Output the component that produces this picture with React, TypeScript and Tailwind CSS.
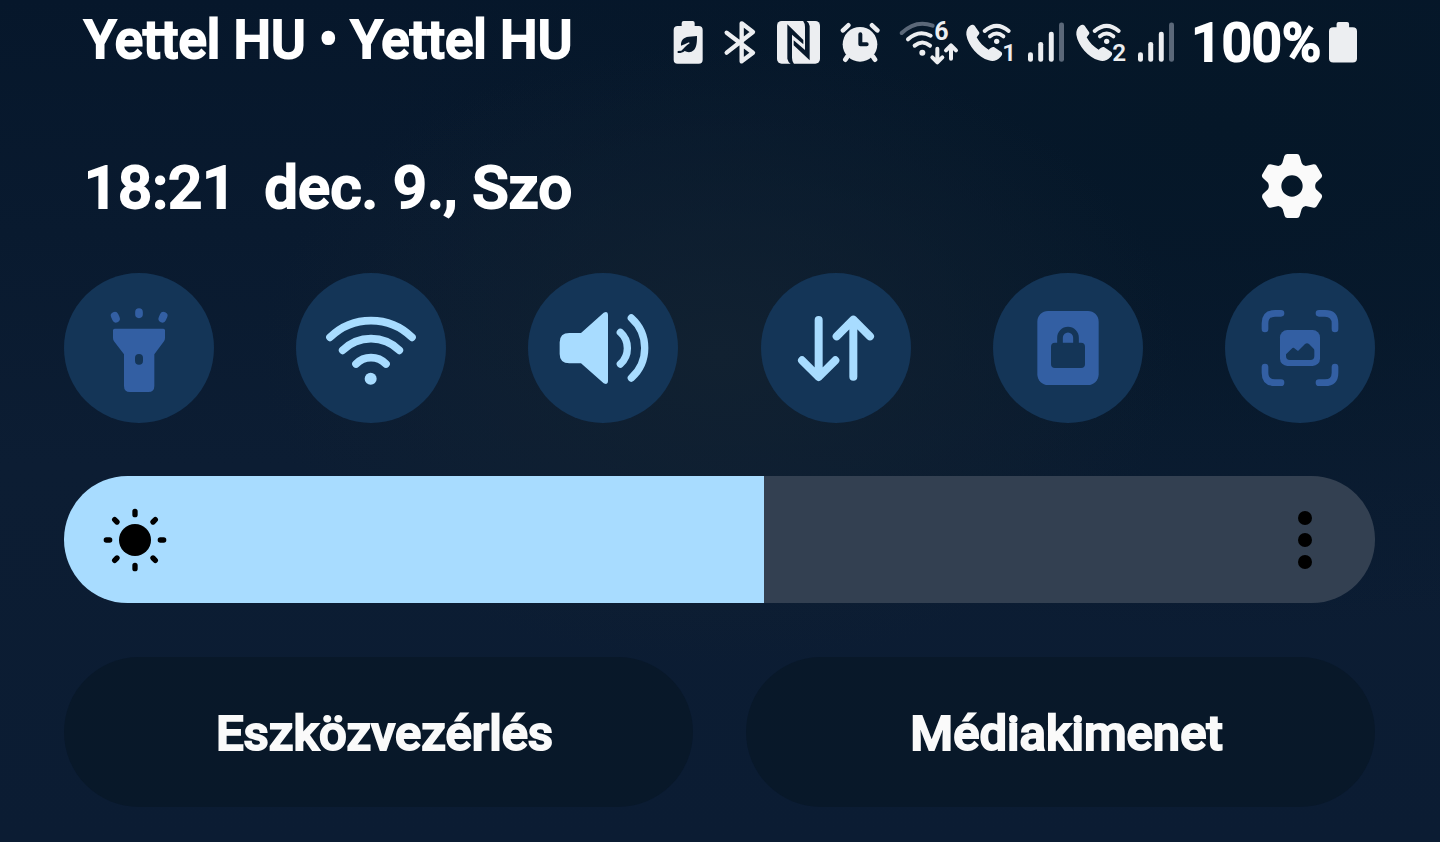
import { useState } from "react";
import type { ReactNode } from "react";

const EcoBatteryIcon = () => (
  <svg viewBox="37 60 90 138" className="h-[46px] w-[30px]" fill="#eceef1">
    <path d="M69 63 H96 Q102 63 102 69 V78 H114 Q126 78 126 90 V179 Q126 191 114 191 H51 Q39 191 39 179 V90 Q39 78 51 78 H63 V69 Q63 63 69 63 Z" />
    <path fill="#07182b" d="M109 108 L84 110 C68 112 60 121 61 137 C68 136 76 131 85 127 L87 130 C76 137 69 146 62 152 L51 153 V159 C58 160 66 158 72 153 C80 158 92 158 99 151 C108 142 109 128 109 108 Z" />
  </svg>
);

const BluetoothIcon = () => (
  <svg viewBox="189 60 102 138" className="h-[46px] w-[34px]" fill="none" stroke="#eceef1" strokeWidth="13" strokeLinecap="round" strokeLinejoin="round">
    <path d="M200 98 L279 158 L245 184 V70 L279 96 L200 158" />
  </svg>
);

const NfcIcon = () => (
  <svg viewBox="351 60 129 138" className="h-[46px] w-[43px]">
    <rect x="351" y="63" width="129" height="128" rx="14" fill="#eceef1" />
    <g fill="#07182b">
      <path d="M382 73 L430 120 V133 L396 104 V173 Q396 184 402 192 H392 Q385 188 382 176 Z" />
      <path d="M449 181 L401 136 V121 L435 150 V81 Q435 70 429 62 H439 Q446 66 449 78 Z" />
    </g>
  </svg>
);

const AlarmIcon = () => (
  <svg viewBox="540 60 120 138" className="h-[46px] w-10" fill="none" strokeLinecap="round" strokeLinejoin="round">
    <g stroke="#eceef1" strokeWidth="14">
      <path d="M549 91 L565 76 M636 76 L652 91 M562 170 L556 179 M639 170 L645 179" />
    </g>
    <circle cx="600" cy="133" r="52" fill="#eceef1" />
    <path d="M601 103 V133 H620" stroke="#07182b" strokeWidth="12" />
  </svg>
);

const Wifi6Icon = () => (
  <svg viewBox="30 60 174 138" className="h-[46px] w-[58px] overflow-visible" fill="none" strokeLinecap="round" strokeLinejoin="round">
    <path d="M35 99 Q78 58 128 77" stroke="#5b6879" strokeWidth="12" />
    <g stroke="#eceef1" strokeWidth="12">
      <path d="M54 118 Q86 88 122 107" />
      <path d="M74 137 Q97 118 120 137" />
      <path d="M142 146 V186 M127 172 L142 187 L157 172" />
      <path d="M183 176 V137 M168 151 L183 136 L198 151" />
    </g>
    <circle cx="97" cy="158" r="9" fill="#eceef1" />
    <text x="133" y="121" fill="#eceef1" fontSize="75" fontWeight="700">6</text>
  </svg>
);

const WifiCallIcon = ({ sim }: { sim: string }) => (
  <svg viewBox="222 60 150 138" className="h-[46px] w-[50px] overflow-visible" fill="none" strokeLinecap="round">
    <path fill="#eceef1" d="M234 77 C240 73 246 74 249 79 L261 96 C264 101 260 104 254 112 C262 128 276 141 290 149 C298 142 302 139 307 142 L328 156 C332 160 331 165 326 170 C314 184 302 185 290 181 C260 172 228 138 223 104 C222 92 226 82 234 77 Z" />
    <g stroke="#eceef1" strokeWidth="12">
      <path d="M278 93 Q314 62 350 93" />
      <path d="M294 109 Q314 92 334 109" />
    </g>
    <circle cx="314" cy="124" r="8" fill="#eceef1" />
    <text x="331" y="184" fill="#eceef1" fontSize="73" fontWeight="600">{sim}</text>
  </svg>
);

const SignalIcon = () => (
  <svg viewBox="407 60 109 138" className="h-[46px] w-9" fill="#eceef1">
    <rect x="407" y="157" width="15" height="29" rx="7" />
    <rect x="438" y="126" width="15" height="60" rx="7" />
    <rect x="470" y="95" width="15" height="91" rx="7" />
    <rect x="501" y="67" width="15" height="119" rx="7" fill="#5b6879" />
  </svg>
);

const BatteryIcon = () => (
  <svg viewBox="627 60 85 138" className="h-[46px] w-7" fill="#eceef1">
    <path d="M656 65 H682 Q688 65 688 71 V81 H699 Q712 81 712 93 V176 Q712 188 699 188 H640 Q627 188 627 176 V93 Q627 81 640 81 H650 V71 Q650 65 656 65 Z" />
  </svg>
);

const GearIcon = () => (
  <svg viewBox="60 72 192 192" className="size-16" fill="#fafafa" fillRule="evenodd">
    <path d="M142 72 H171 Q177 72 179 78 L185 99 Q188 107 197 108 L221 103 Q227 103 230 107 L245 133 Q248 138 244 143 L228 158 Q223 168 228 178 L244 193 Q248 198 245 204 L230 229 Q227 234 221 233 L197 228 Q188 229 185 237 L179 258 Q177 264 171 264 H142 Q136 264 134 258 L128 237 Q124 229 115 228 L91 233 Q85 234 82 229 L67 204 Q65 198 68 193 L84 178 Q89 168 84 158 L68 143 Q64 138 67 133 L82 107 Q85 103 91 103 L115 108 Q124 107 127 99 L133 78 Q136 72 142 72 Z M156 136 A32 32 0 1 0 156 200 A32 32 0 1 0 156 136 Z" />
  </svg>
);

const TorchIcon = () => (
  <svg viewBox="42 39 450 450" className="size-full">
    <path fill="currentColor" d="M194 206 H340 Q345 206 345 211 V234 Q345 240 342 244 L313 283 V378 Q313 396 295 396 H240 Q222 396 222 378 V283 L192 244 Q189 240 189 234 V211 Q189 206 194 206 Z" />
    <rect x="255" y="282" width="24" height="32" rx="12" fill="#143557" />
    <path d="M267 156 V163 M194 167 L198 176 M341 167 L337 176" fill="none" stroke="currentColor" strokeWidth="23" strokeLinecap="round" />
  </svg>
);

const WifiIcon = () => (
  <svg viewBox="738 39 450 450" className="size-full" fill="none" stroke="currentColor" strokeWidth="23" strokeLinecap="round">
    <path d="M840 232 A176 176 0 0 1 1086 232" />
    <path d="M878 271 A121 121 0 0 1 1048 271" />
    <path d="M918 312 A63 63 0 0 1 1008 312" />
    <circle cx="962" cy="356" r="18" fill="currentColor" stroke="none" />
  </svg>
);

const SoundIcon = () => (
  <svg viewBox="24 39 450 450" className="size-full" fill="none" stroke="currentColor" strokeWidth="22" strokeLinecap="round">
    <path fill="currentColor" stroke="none" d="M148 219 H183 L251 158 Q264 152 264 164 V364 Q264 376 251 370 L183 310 H148 Q119 310 119 282 V247 Q119 219 148 219 Z" />
    <path d="M301 217 A64 64 0 0 1 301 312" />
    <path d="M334 174 A121 121 0 0 1 334 354" />
  </svg>
);

const MobileDataIcon = () => (
  <svg viewBox="720 39 450 450" className="size-full" fill="none" stroke="currentColor" strokeWidth="24" strokeLinecap="round" strokeLinejoin="round">
    <path d="M893 180 V350 M843 301 L893 351 L943 301" />
    <path d="M997 350 V180 M947 229 L997 179 L1047 229" />
  </svg>
);

const SecureFolderIcon = () => (
  <svg viewBox="36 39 450 450" className="size-full">
    <rect x="169" y="153" width="184" height="222" rx="32" fill="currentColor" />
    <rect x="210" y="248" width="102" height="76" rx="12" fill="#143557" />
    <path d="M237 256 V233 A24 24 0 0 1 285 233 V256" fill="none" stroke="#143557" strokeWidth="17" />
  </svg>
);

const ScreenshotIcon = () => (
  <svg viewBox="732 39 450 450" className="size-full">
    <g fill="none" stroke="currentColor" strokeWidth="20" strokeLinecap="round">
      <path d="M900 160 H882 Q852 160 852 190 V207" />
      <path d="M1014 160 H1032 Q1062 160 1062 190 V207" />
      <path d="M852 321 V338 Q852 368 882 368 H900" />
      <path d="M1062 321 V338 Q1062 368 1032 368 H1014" />
    </g>
    <rect x="897" y="210" width="120" height="108" rx="22" fill="currentColor" />
    <path fill="#143557" d="M915 283 L932 266 Q937 261 942 266 L951 273 L972 252 Q978 247 984 252 L998 266 Q1000 268 1000 272 V288 Q1000 300 988 300 H927 Q915 300 915 288 Z" />
  </svg>
);

const SunIcon = () => (
  <svg viewBox="159 144 192 192" className="size-16">
    <circle cx="255" cy="240" r="48" />
    <path d="M255 154 V164 M255 316 V326 M169 240 H179 M331 240 H341 M194 179 L201 186 M316 179 L309 186 M194 301 L201 294 M316 301 L309 294" stroke="#000" strokeWidth="16" strokeLinecap="round" />
  </svg>
);

type Tile = { label: string; on: boolean; icon: ReactNode };

const tiles: Tile[] = [
  { label: "Zseblámpa", on: false, icon: <TorchIcon /> },
  { label: "Wi-Fi", on: true, icon: <WifiIcon /> },
  { label: "Hang", on: true, icon: <SoundIcon /> },
  { label: "Mobiladatok", on: true, icon: <MobileDataIcon /> },
  { label: "Biztonsági mappa", on: false, icon: <SecureFolderIcon /> },
  { label: "Képernyőkép", on: false, icon: <ScreenshotIcon /> },
];

// the phone's own bold is a thickened medium weight
const heavy = "font-medium [-webkit-text-stroke:2px_currentColor]";

const StatusBar = () => (
  <div className="flex items-start justify-between pt-4 pl-[84px] pr-[83px]">
    <span className={`text-[53px] leading-[48px] ${heavy}`}>Yettel HU • Yettel HU</span>

    <div className="flex items-center gap-2">
      <div className="flex items-center gap-5">
        <EcoBatteryIcon />
        <BluetoothIcon />
        <NfcIcon />
        <AlarmIcon />
        <Wifi6Icon />
      </div>
      <div className="flex items-center gap-3">
        <WifiCallIcon sim="1" />
        <SignalIcon />
        <WifiCallIcon sim="2" />
        <SignalIcon />
      </div>
      <div className="flex items-center gap-2 pl-2.5">
        <span className={`text-[53px] leading-[54px] ${heavy}`}>100%</span>
        <BatteryIcon />
      </div>
    </div>
  </div>
);

const BrightnessSlider = () => {
  const [level, setLevel] = useState(534);

  return (
    <div className="relative h-[127px] overflow-hidden rounded-full">
      <input
        type="range"
        aria-label="Fényerő"
        min={0}
        max={1000}
        value={level}
        onChange={(e) => setLevel(Number(e.target.value))}
        className="block h-full w-full appearance-none [&::-webkit-slider-thumb]:size-0 [&::-webkit-slider-thumb]:appearance-none"
        style={{
          background: `linear-gradient(to right, #a8dcff ${level / 10}%, #334051 ${level / 10}%)`,
        }}
      />
      <div className="pointer-events-none absolute inset-y-0 left-[39px] flex items-center">
        <SunIcon />
      </div>
      <button aria-label="Fényerő beállításai" className="absolute inset-y-0 right-[63px] flex flex-col items-center justify-center gap-2">
        <span className="size-[14px] rounded-full bg-black" />
        <span className="size-[14px] rounded-full bg-black" />
        <span className="size-[14px] rounded-full bg-black" />
      </button>
    </div>
  );
};

const PanelButton = ({ children }: { children: ReactNode }) => (
  <button className={`h-[150px] rounded-full bg-[#05131f]/50 pt-1 pl-3 text-[49px] text-[#fafafa] ${heavy}`}>
    {children}
  </button>
);

export default function App() {
  return (
    <main className="min-h-screen bg-[#0a1b31] bg-[radial-gradient(ellipse_at_50%_42%,#112131_0%,#11213100_45%),radial-gradient(ellipse_at_85%_15%,#051728_0%,#05172800_50%),linear-gradient(to_bottom,#06172b_0%,#0c1d33_55%,#0b1c33_100%)] pb-9 font-[Roboto,sans-serif] text-white">
      <StatusBar />

      {/* Clock row */}
      <header className="mt-20 flex items-center justify-between pl-[84px] pr-[116px]">
        <h1 className={`flex gap-7 pt-1 text-[60px] leading-[68px] ${heavy}`}>
          <time>18:21</time>
          <span>dec. 9., Szo</span>
        </h1>
        <button aria-label="Beállítások">
          <GearIcon />
        </button>
      </header>

      <div className="mt-[51px] pl-16 pr-[65px]">
        {/* Quick toggles */}
        <div className="flex justify-between">
          {tiles.map((tile) => (
            <button
              key={tile.label}
              aria-label={tile.label}
              aria-pressed={tile.on}
              className={`size-[150px] rounded-full bg-[#143557] ${tile.on ? "text-[#a8dcff]" : "text-[#335fa3]"}`}
            >
              {tile.icon}
            </button>
          ))}
        </div>

        <div className="mt-[53px]">
          <BrightnessSlider />
        </div>

        <div className="mt-[54px] grid grid-cols-2 gap-[53px]">
          <PanelButton>Eszközvezérlés</PanelButton>
          <PanelButton>Médiakimenet</PanelButton>
        </div>
      </div>
    </main>
  );
}
